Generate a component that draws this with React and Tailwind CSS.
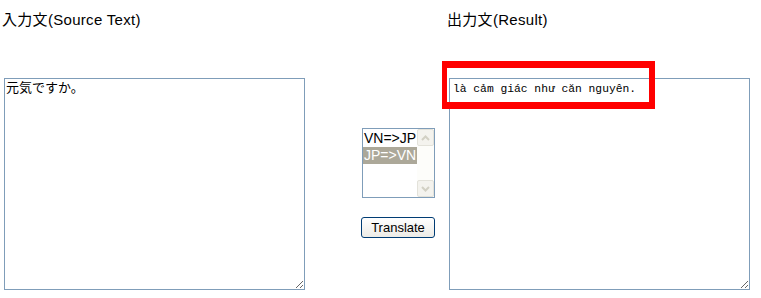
import React from "react";

const headFont = { fontFamily: '"Liberation Sans", "Noto Sans CJK JP", sans-serif' };

function ListBox() {
  return (
    <div className="w-[73px] h-[70px] border border-[#7f9db9] bg-white flex">
      <div className="flex-1 pt-[1px] text-[14px] leading-[17px] text-black" style={headFont}>
        <div className="pl-[1px]">VN=&gt;JP</div>
        <div className="pl-[1px] bg-[#aca899] text-white">JP=&gt;VN</div>
      </div>
      {/* scrollbar */}
      <div className="w-[17px] bg-[#fdfdfa] flex flex-col justify-between">
        <div className="h-[17px] border border-[#e3e2da] rounded-[2px] bg-[#f4f3ee] flex items-center justify-center">
          <svg width="9" height="6" viewBox="0 0 9 6">
            <path d="M1 5 L4.5 1.5 L8 5" fill="none" stroke="#d2d0c4" strokeWidth="2" />
          </svg>
        </div>
        <div className="h-[17px] border border-[#e3e2da] rounded-[2px] bg-[#f4f3ee] flex items-center justify-center">
          <svg width="9" height="6" viewBox="0 0 9 6">
            <path d="M1 1 L4.5 4.5 L8 1" fill="none" stroke="#d2d0c4" strokeWidth="2" />
          </svg>
        </div>
      </div>
    </div>
  );
}

export default function App() {
  return (
    <div className="relative w-[761px] h-[298px] bg-white overflow-hidden">
      <div className="flex pt-[11px]">
        {/* Source column */}
        <div className="pl-[2px] w-[305px] shrink-0">
          <h2 className="text-[15px] leading-[18px] tracking-[0.3px] text-black" style={headFont}>
            入力文(Source Text)
          </h2>
          <textarea
            readOnly
            value="元気ですか。"
            className="block mt-[49px] ml-[2px] w-[301px] h-[212px] border border-[#7f9db9] px-[1px] pt-[0px] text-[13px] leading-[15px] text-black outline-none"
            style={{ fontFamily: '"Noto Sans CJK JP", "Liberation Mono", monospace' }}
          />
        </div>

        {/* Middle column */}
        <div className="ml-[56px] w-[86px] shrink-0 pt-[117px]">
          <div className="ml-[1px]">
            <ListBox />
          </div>
          <button
            className="mt-[19px] w-[74px] h-[21px] rounded-[3px] border border-[#003c74] bg-gradient-to-b from-white to-[#ecebe6] text-[13px] leading-[17px] text-black"
            style={headFont}
          >
            Translate
          </button>
        </div>

        {/* Result column */}
        <div className="w-[305px] shrink-0">
          <h2 className="text-[15px] leading-[18px] tracking-[0.3px] text-black" style={headFont}>
            出力文(Result)
          </h2>
          <textarea
            readOnly
            value="là cảm giác như căn nguyên."
            className="block mt-[49px] ml-[2px] w-[301px] h-[212px] border border-[#7f9db9] px-[3px] pt-[3px] text-[11.3px] leading-[15px] text-black outline-none"
            style={{ fontFamily: '"Liberation Mono", "DejaVu Sans Mono", monospace' }}
          />
        </div>
      </div>

      {/* highlight annotation */}
      <div className="absolute left-[442px] top-[61px] w-[213px] h-[48px] border-t-[7px] border-b-[7px] border-l-[5px] border-r-[6px] border-[#ff0000] pointer-events-none" />
    </div>
  );
}
